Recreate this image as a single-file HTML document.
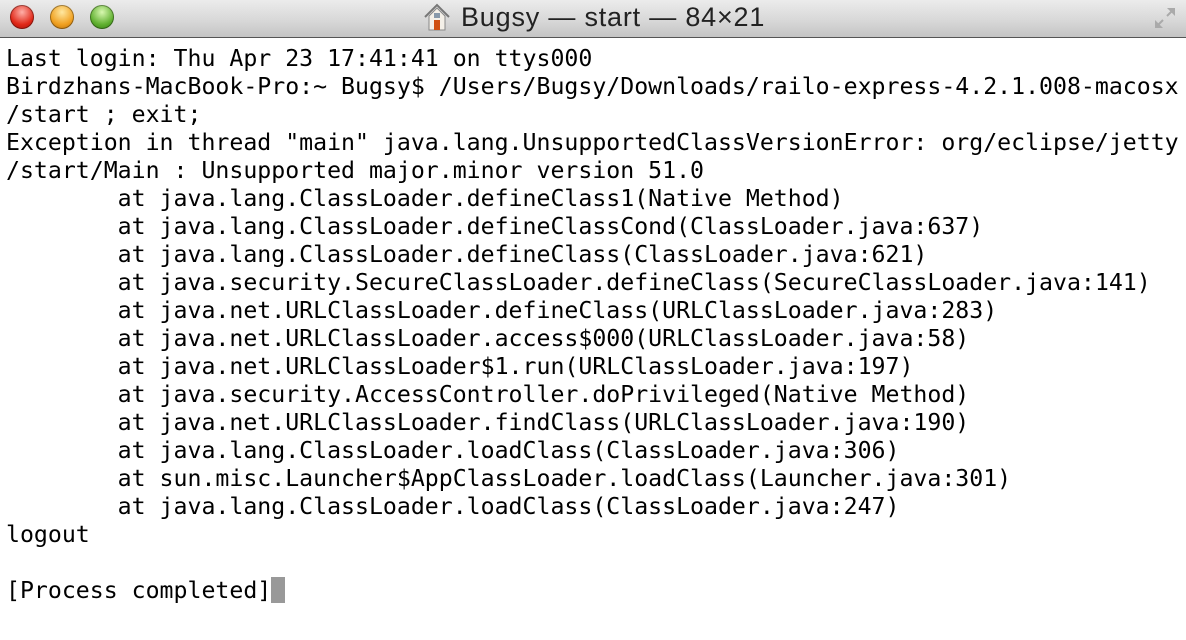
<!DOCTYPE html>
<html><head><style>
html,body{margin:0;padding:0;width:1186px;height:640px;overflow:hidden;background:#fff}
#tb{position:absolute;left:0;top:0;width:1186px;height:37px;background:linear-gradient(#ececec,#d6d6d6 60%,#c4c4c4);border-bottom:1px solid #555}
.b{position:absolute;top:5px;width:24px;height:24px;border-radius:50%;box-shadow:inset 0 0 0 1px rgba(0,0,0,.35)}
#t{position:absolute;left:461px;top:2px;font:27px "Liberation Sans",sans-serif;color:#222;letter-spacing:0.8px}
pre{position:absolute;left:6px;top:45px;margin:0;font:23.2px/28px "DejaVu Sans Mono","Liberation Mono",monospace;color:#000}
.cur{display:inline-block;width:14px;height:26px;background:#999;vertical-align:-5px}
</style></head><body>
<div id="tb">
<div class="b" style="left:10px;background:radial-gradient(circle at 50% 30%,#ffb0a8,#e02818 60%,#a01008)"></div>
<div class="b" style="left:50px;background:radial-gradient(circle at 50% 30%,#ffe8a0,#f0a020 60%,#b06808)"></div>
<div class="b" style="left:90px;background:radial-gradient(circle at 50% 30%,#d8f8b0,#60b030 60%,#307810)"></div>
<svg style="position:absolute;left:422px;top:2px" width="30" height="30" viewBox="0 0 30 30"><path d="M3 15 L15 3 L27 15" fill="none" stroke="#777" stroke-width="2"/><path d="M7 14 L15 6 L23 14 V28 H7Z" fill="#f4f0e8" stroke="#888"/><rect x="12" y="18" width="6" height="10" fill="#d05010"/><rect x="12" y="11" width="6" height="5" fill="#89a"/></svg>
<div id="t">Bugsy — start — 84×21</div>
<svg style="position:absolute;left:1153px;top:6px" width="24" height="24" viewBox="0 0 24 24"><path d="M14 2 H22 V10 Z M2 22 V14 L10 22 Z" fill="#aaa"/><path d="M20 4 L14 10 M4 20 L10 14" stroke="#aaa" stroke-width="2"/></svg>
</div>
<pre>Last login: Thu Apr 23 17:41:41 on ttys000
Birdzhans-MacBook-Pro:~ Bugsy$ /Users/Bugsy/Downloads/railo-express-4.2.1.008-macosx
/start ; exit;
Exception in thread "main" java.lang.UnsupportedClassVersionError: org/eclipse/jetty
/start/Main : Unsupported major.minor version 51.0
        at java.lang.ClassLoader.defineClass1(Native Method)
        at java.lang.ClassLoader.defineClassCond(ClassLoader.java:637)
        at java.lang.ClassLoader.defineClass(ClassLoader.java:621)
        at java.security.SecureClassLoader.defineClass(SecureClassLoader.java:141)
        at java.net.URLClassLoader.defineClass(URLClassLoader.java:283)
        at java.net.URLClassLoader.access$000(URLClassLoader.java:58)
        at java.net.URLClassLoader$1.run(URLClassLoader.java:197)
        at java.security.AccessController.doPrivileged(Native Method)
        at java.net.URLClassLoader.findClass(URLClassLoader.java:190)
        at java.lang.ClassLoader.loadClass(ClassLoader.java:306)
        at sun.misc.Launcher$AppClassLoader.loadClass(Launcher.java:301)
        at java.lang.ClassLoader.loadClass(ClassLoader.java:247)
logout

[Process completed]<span class="cur"></span></pre>
</body></html>
